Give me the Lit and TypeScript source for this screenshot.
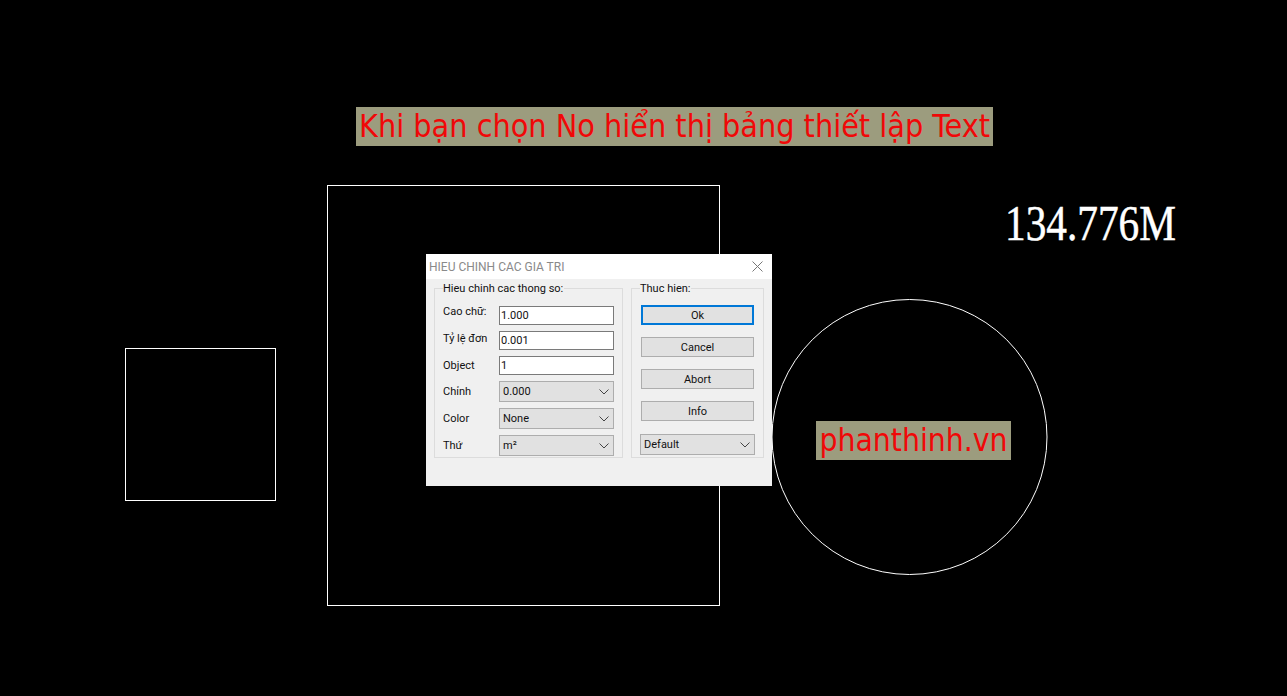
import { LitElement, html, css, svg } from "lit";
import { customElement } from "lit/decorators.js";

const chevron = html`<svg class="chev" width="10" height="6" viewBox="0 0 10 6"><path d="M0.5 0.5 L5 5 L9.5 0.5" fill="none" stroke="#444" stroke-width="1"/></svg>`;

@customElement("app-root")
export class AppRoot extends LitElement {
  static styles = css`
    :host { display: block; width: 1287px; height: 696px; background: #000; position: relative; overflow: hidden; font-family: Roboto, "Open Sans", sans-serif; }
    .drawing { position: absolute; left: 0; top: 0; }
    .tag { position: absolute; background: #9c9c7e; color: #f00808; font-family: "DejaVu Sans", sans-serif; font-stretch: condensed; display: flex; align-items: center; justify-content: center; white-space: nowrap; padding-bottom: 2px; box-sizing: border-box; }
    .tag.head { left: 356px; top: 107px; width: 637px; height: 39px; font-size: 32px; }
    .tag.site { left: 816px; top: 421px; width: 195px; height: 39px; font-size: 31.5px; }
    .measure { position: absolute; left: 1005px; top: 194px; font: 51px/58px "Liberation Serif", serif; color: #fff; white-space: nowrap; -webkit-text-stroke: 0.5px #fff; transform: scaleX(0.81); transform-origin: left center; }
    .dialog { position: absolute; left: 426px; top: 254px; width: 346px; height: 232px; background: #f0f0f0; display: flex; flex-direction: column; color: #111; font-size: 11px; }
    .title { height: 25px; background: #fff; display: flex; align-items: center; justify-content: space-between; padding: 0 9px 0 3px; color: #8a8a8a; font-size: 12px; flex: none; }
    .body { display: flex; gap: 8px; padding: 2px 8px 0 8px; }
    fieldset { margin: 0; border: 1px solid #dcdcdc; height: 177px; box-sizing: border-box; min-width: 0; }
    legend { padding: 0 1px 0 0; font-size: 11px; line-height: 15px; color: #111; }
    .left { width: 189px; padding: 0 8px 0 8px; }
    .right { width: 133px; padding: 0 8px 0 9px; }
    .right legend { margin-left: -1px; }
    .rows { display: grid; grid-template-columns: 56px 115px; grid-template-rows: 19px 19px 19px 21px 21px 21px; row-gap: 6px; margin-top: 10px; }
    .rows label { display: flex; align-items: center; white-space: nowrap; font-size: 11px; }
    .up4 { padding-bottom: 8px; }
    .up2 { padding-bottom: 4px; }
    input { box-sizing: border-box; width: 115px; height: 19px; border: 1px solid #7a7a7a; background: #fff; padding: 0 0 0 1px; margin: 0; font: 11px Roboto, sans-serif; color: #111; outline: none; }
    .combo { box-sizing: border-box; height: 21px; background: #e1e1e1; border: 1px solid #adadad; display: flex; align-items: center; justify-content: space-between; padding: 0 4px 0 3px; font-size: 11px; }
    .actions { display: flex; flex-direction: column; gap: 12px; margin-top: 9px; }
    .btn { box-sizing: border-box; width: 113px; height: 20px; background: #e1e1e1; border: 1px solid #adadad; display: flex; align-items: center; justify-content: center; font-size: 11px; }
    .btn.primary { border: 2px solid #0078d7; }
    .combo.wide { width: 115px; margin: 1px 0 0 -1px; }
  `;

  render() {
    return html`
      <svg class="drawing" width="1287" height="696" viewBox="0 0 1287 696" fill="none" stroke="#fff" stroke-width="1">
        ${svg`<rect x="125.5" y="348.5" width="150" height="152"/>
        <rect x="327.5" y="185.5" width="392" height="420"/>
        <circle cx="909.5" cy="437" r="137.5"/>`}
      </svg>
      <div class="tag head">Khi bạn chọn No hiển thị bảng thiết lập Text</div>
      <div class="tag site">phanthinh.vn</div>
      <div class="measure">134.776M</div>
      <div class="dialog">
        <div class="title">
          <span>HIEU CHINH CAC GIA TRI</span>
          <svg width="11" height="11" viewBox="0 0 11 11"><path d="M0.5 0.5 L10.5 10.5 M10.5 0.5 L0.5 10.5" stroke="#777" stroke-width="1" fill="none"/></svg>
        </div>
        <div class="body">
          <fieldset class="left">
            <legend>Hieu chinh cac thong so:</legend>
            <div class="rows">
              <label class="up4">Cao chữ:</label><input .value=${"1.000"} />
              <label class="up2">Tỷ lệ đơn</label><input .value=${"0.001"} />
              <label>Object</label><input .value=${"1"} />
              <label>Chỉnh</label><div class="combo"><span>0.000</span>${chevron}</div>
              <label>Color</label><div class="combo"><span>None</span>${chevron}</div>
              <label>Thứ</label><div class="combo"><span>m²</span>${chevron}</div>
            </div>
          </fieldset>
          <fieldset class="right">
            <legend>Thuc hien:</legend>
            <div class="actions">
              <div class="btn primary">Ok</div>
              <div class="btn">Cancel</div>
              <div class="btn">Abort</div>
              <div class="btn">Info</div>
              <div class="combo wide"><span>Default</span>${chevron}</div>
            </div>
          </fieldset>
        </div>
      </div>
    `;
  }
}
